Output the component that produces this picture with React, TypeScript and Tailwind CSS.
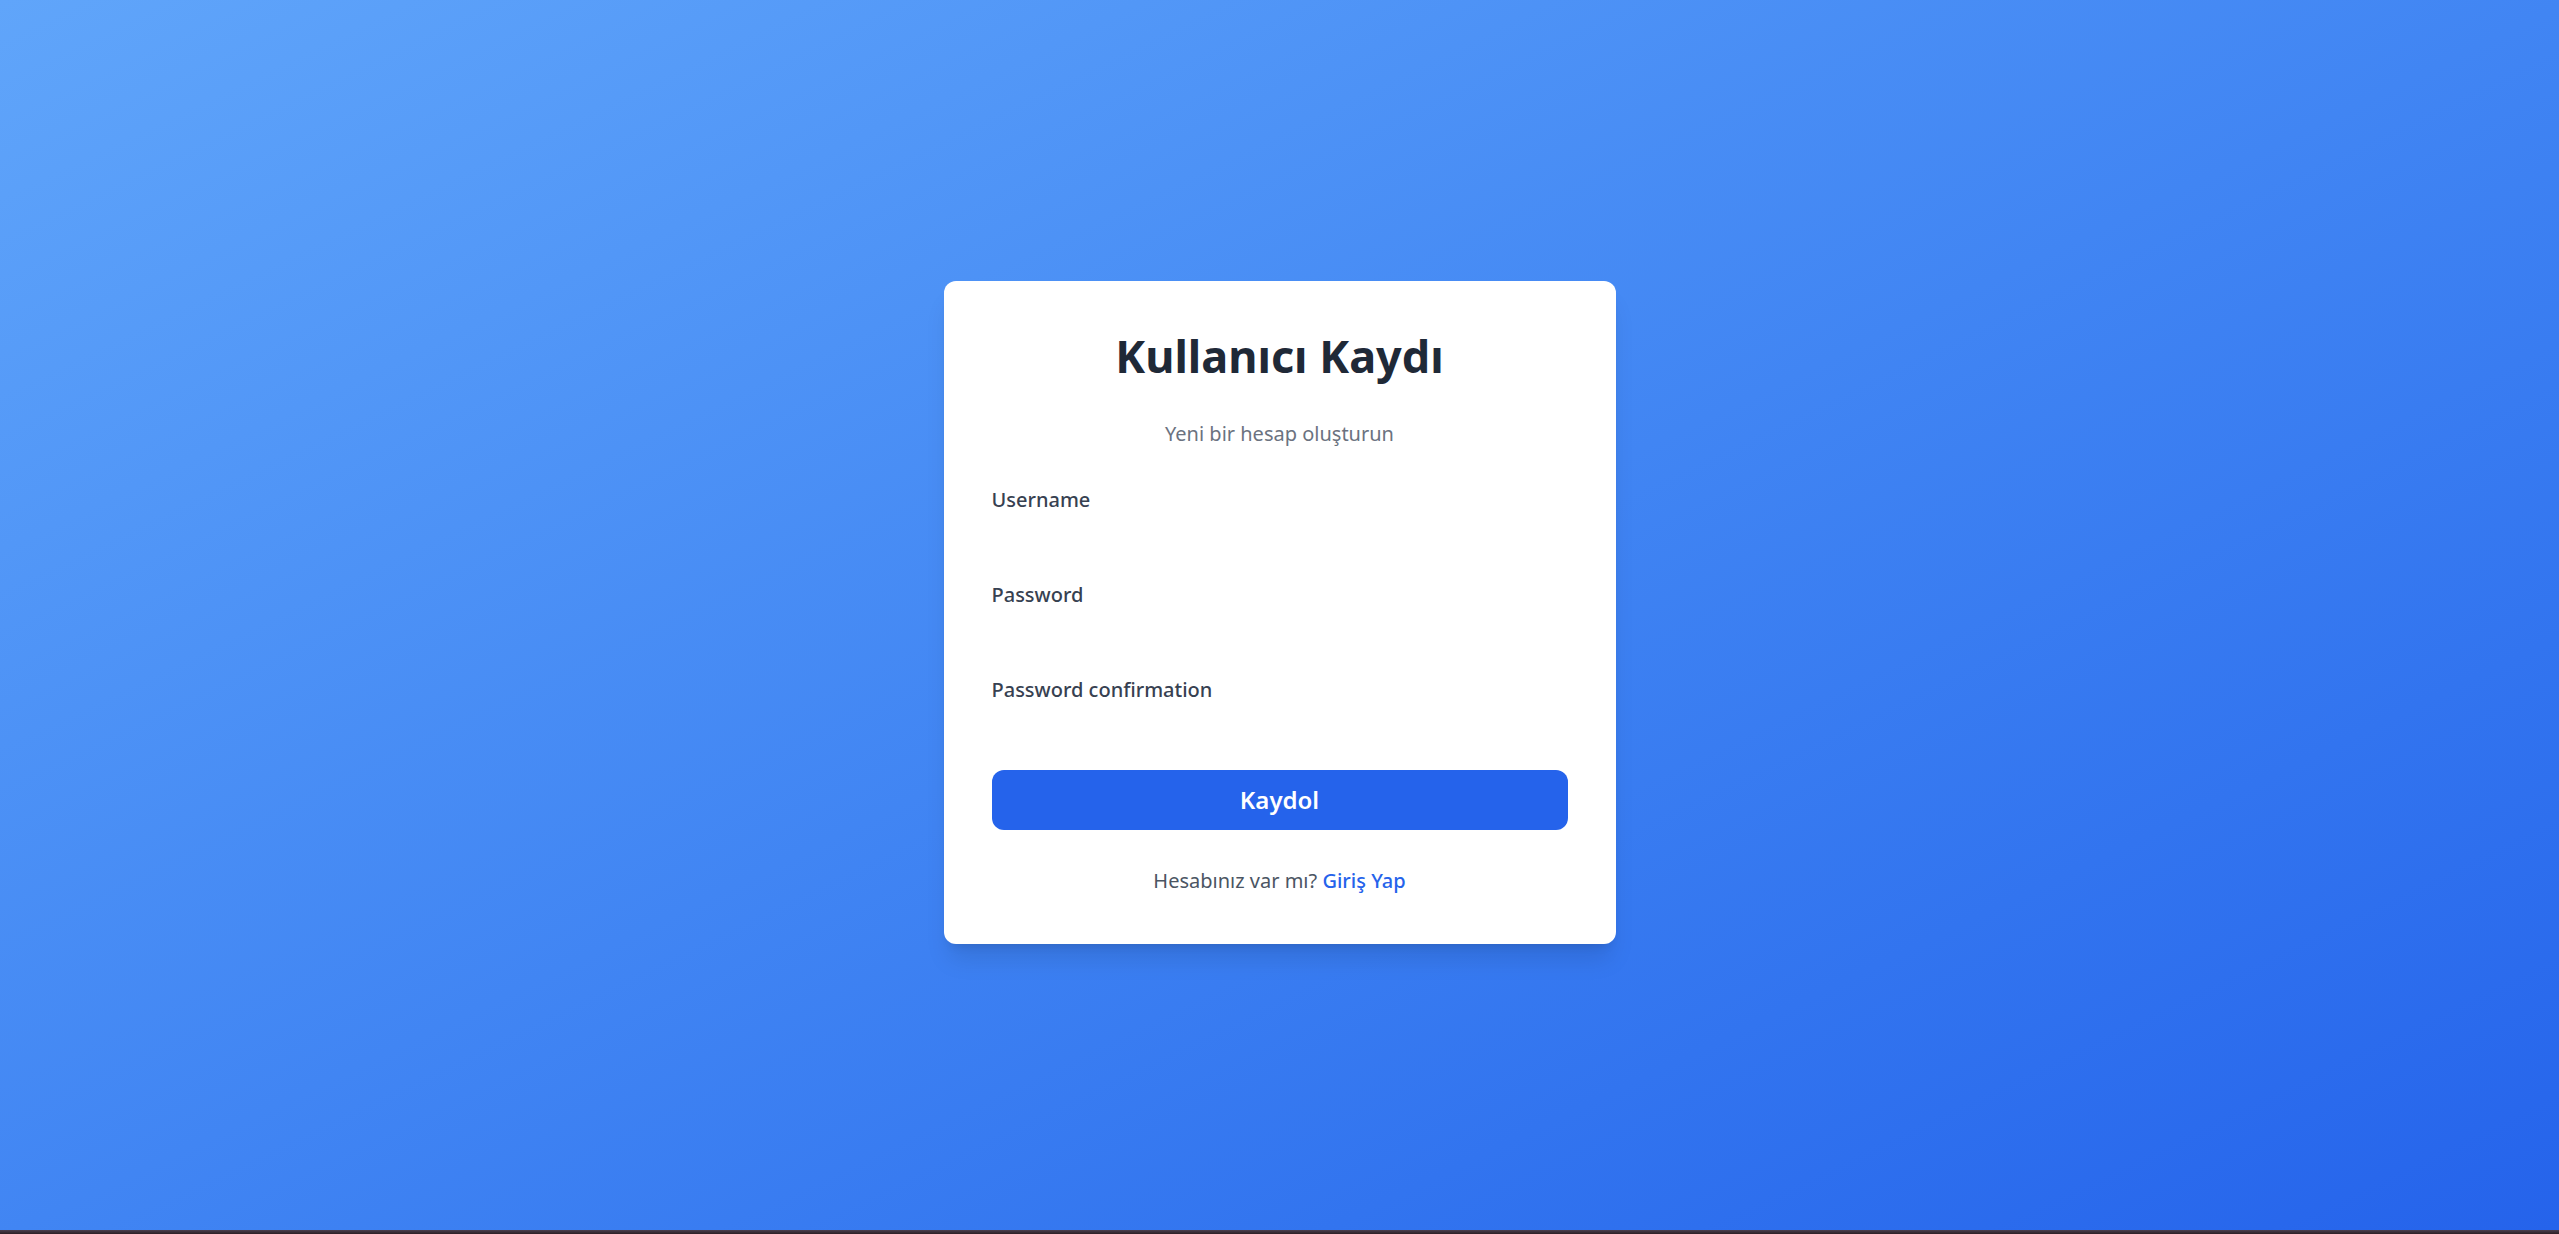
import React from 'react';

const fields = ['Username', 'Password', 'Password confirmation'];

const App: React.FC = () => {
  return (
    <div className="font-['Noto_Sans',sans-serif] h-[1234px] overflow-hidden">
      <div className="h-[1230px] pb-[5px] flex items-center justify-center bg-linear-to-br from-[#60a5fa] to-[#2563eb]">
        <div className="w-[672px] bg-white rounded-[12px] shadow-xl p-[48px]">
          <h1 className="text-[45px] leading-[54px] font-bold text-center text-[#1f2937] mb-[36px]">
            Kullanıcı Kaydı
          </h1>
          <p className="text-[20px] leading-[30px] text-center text-[#6b7280] mb-[36px]">
            Yeni bir hesap oluşturun
          </p>

          <form onSubmit={(e) => e.preventDefault()}>
            {fields.map((f) => (
              <div key={f} className="flex flex-col h-[95px]">
                <label className="block text-[20px] leading-[30px] font-medium text-[#374151]">{f}</label>
                <input
                  type={f === 'Username' ? 'text' : 'password'}
                  className="mt-[6px] h-[42px] w-full bg-transparent outline-none"
                />
              </div>
            ))}

            <button
              type="submit"
              className="w-full h-[60px] rounded-[12px] bg-[#2563eb] text-white text-[24px] leading-[36px] font-semibold">
              Kaydol
            </button>
          </form>

          <p className="mt-[36px] text-[20px] leading-[30px] text-center text-[#4b5563]">
            Hesabınız var mı?{' '}
            <a href="#" className="text-[#2563eb] font-medium">
              Giriş Yap
            </a>
          </p>
        </div>
      </div>
      <div className="h-[4px] bg-linear-to-b from-[#4b4050] to-[#2d1f25]" />
    </div>
  );
};

export default App;
